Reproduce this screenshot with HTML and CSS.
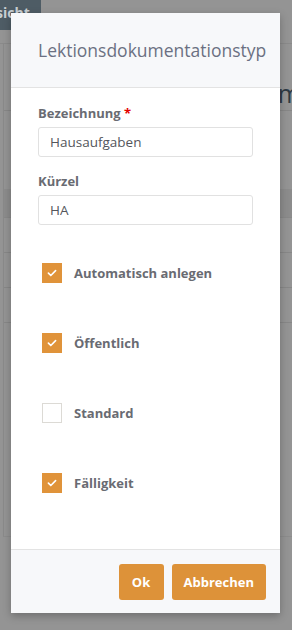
FILE: index.html
```html
<!DOCTYPE html>
<html lang="de">
<head>
  <meta charset="UTF-8">
  <title>Lektionsdokumentationstyp</title>
  <link rel="stylesheet" href="styles.css">
</head>
<body>
  <div class="page">
    <div class="topbar">
      <span class="tab">sicht</span>
    </div>
    <div class="sheet">
      <div class="sheet-head">m</div>
      <div class="row row-dark"></div>
      <div class="row"></div>
      <div class="row"></div>
      <div class="row"></div>
      <div class="row row-last"></div>
    </div>
  </div>

  <div class="modal">
    <div class="modal-header">
      <h2>Lektionsdokumentationstyp</h2>
    </div>
    <div class="modal-body">
      <label class="field-label">Bezeichnung <span class="req">*</span></label>
      <input type="text" class="field" value="Hausaufgaben">
      <label class="field-label">Kürzel</label>
      <input type="text" class="field" value="HA">

      <div class="checks">
        <div class="check-row">
          <span class="box checked"><svg viewBox="0 0 20 20"><path d="M6 10.2l2.7 2.6L14 7.4"/></svg></span>
          <span class="check-label">Automatisch anlegen</span>
        </div>
        <div class="check-row">
          <span class="box checked"><svg viewBox="0 0 20 20"><path d="M6 10.2l2.7 2.6L14 7.4"/></svg></span>
          <span class="check-label">Öffentlich</span>
        </div>
        <div class="check-row">
          <span class="box"></span>
          <span class="check-label">Standard</span>
        </div>
        <div class="check-row">
          <span class="box checked"><svg viewBox="0 0 20 20"><path d="M6 10.2l2.7 2.6L14 7.4"/></svg></span>
          <span class="check-label">Fälligkeit</span>
        </div>
      </div>
    </div>
    <div class="modal-footer">
      <button class="btn btn-ok">Ok</button>
      <button class="btn">Abbrechen</button>
    </div>
  </div>
</body>
</html>
```

FILE: styles.css
```css
body {
  margin: 0;
  background: #949494;
  font-family: "Open Sans", sans-serif;
  height: 630px;
  overflow: hidden;
}
.page {
  height: 630px;
}
.topbar {
  height: 43px;
  border-bottom: 1px solid #8a8a8a;
}
.tab {
  display: inline-block;
  width: 41px;
  height: 30px;
  background: #4e5c65;
  color: #c9cfd3;
  font-size: 14px;
  font-weight: bold;
  line-height: 25px;
  overflow: hidden;
  text-indent: -4px;
}
.sheet {
  margin-left: 3px;
  border-left: 1px solid #8a8a8a;
  height: 492px;
  border-bottom: 1px solid #8c8c8c;
}
.sheet-head {
  height: 66px;
  border-bottom: 1px solid #878787;
  text-align: right;
  font-size: 25px;
  color: #2e3a44;
  line-height: 98px;
  overflow: hidden;
  padding-right: 0;
  margin-right: -9px;
}
.row {
  height: 34px;
  border-bottom: 1px solid #878787;
}
.row-dark {
  margin-top: 78px;
  height: 28px;
  background: #8c8c8c;
  border-bottom: 1px solid #888;
}
.row-last {
  border-bottom: none;
}

.modal {
  position: absolute;
  left: 11px;
  top: 13px;
  width: 269px;
  height: 600px;
  background: #fff;
  box-shadow: 0 3px 8px rgba(0, 0, 0, 0.25);
  display: flex;
  flex-direction: column;
}
.modal-header {
  height: 74px;
  background: #f7f8fa;
  border-bottom: 1px solid #e3e3e3;
  padding: 0 27px;
  display: flex;
  align-items: center;
}
.modal-header h2 {
  margin: 0;
  font-size: 17.5px;
  font-weight: normal;
  color: #6b7082;
  white-space: nowrap;
}
.modal-body {
  flex: 1;
  padding: 16px 27px 0;
}
.field-label {
  display: block;
  font-size: 13px;
  font-weight: bold;
  color: #696b72;
  line-height: 18px;
  margin-bottom: 5px;
}
.req {
  color: #e30000;
}
.field {
  display: block;
  box-sizing: border-box;
  width: 215px;
  height: 30px;
  margin: 0 0 15px;
  padding: 0 11px;
  border: 1px solid #e1e1e1;
  border-radius: 3px;
  font-family: inherit;
  font-size: 13.5px;
  color: #54565c;
  background: #fff;
}
.checks {
  padding: 23px 0 0 4px;
  display: flex;
  flex-direction: column;
  gap: 50px;
}
.check-row {
  display: flex;
  align-items: center;
  gap: 12px;
  height: 20px;
}
.box {
  box-sizing: border-box;
  width: 20px;
  height: 20px;
  border: 1px solid #dcdad5;
  background: #fff;
}
.box.checked {
  background: #e0933a;
  border-color: #e0933a;
}
.box svg {
  display: block;
  width: 18px;
  height: 18px;
  fill: none;
  stroke: #fff;
  stroke-width: 1.8;
  stroke-linecap: round;
  stroke-linejoin: round;
}
.check-label {
  font-size: 13px;
  font-weight: bold;
  color: #696b72;
}
.modal-footer {
  height: 63px;
  background: #f7f8fa;
  border-top: 1px solid #e3e3e3;
  display: flex;
  justify-content: flex-end;
  align-items: center;
  gap: 8px;
  padding: 0 14px;
}
.btn {
  height: 36px;
  padding: 0 12px;
  border: none;
  border-radius: 3px;
  background: #dd9239;
  color: #fff;
  font-family: inherit;
  font-size: 13px;
  font-weight: bold;
}
.btn-ok {
  min-width: 45px;
}
```
